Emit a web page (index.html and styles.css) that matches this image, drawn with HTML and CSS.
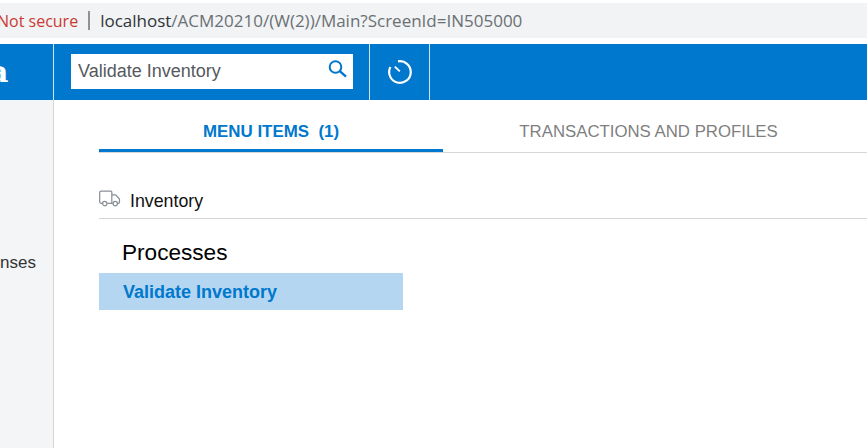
FILE: index.html
```html
<!DOCTYPE html>
<html lang="en">
<head>
<meta charset="utf-8">
<title>Validate Inventory</title>
<link rel="stylesheet" href="styles.css">
</head>
<body>
<div class="browser">
  <span class="insecure">Not secure</span>
  <span class="sep"></span>
  <span class="url"><span class="host">localhost</span>/ACM20210/(W(2))/Main?ScreenId=IN505000</span>
</div>
<header class="topbar">
  <div class="logo"><span class="logo-text">a</span></div>
  <div class="search-cell">
    <div class="search">
      <span class="search-text">Validate Inventory</span>
      <svg class="search-icon" width="20" height="20" viewBox="0 0 20 20" fill="none" stroke="#0077cc" stroke-width="2"><circle cx="7.500" cy="8" r="5.800"/><path d="M11.800 12.200 18 17.600" stroke-width="2.400"/></svg>
    </div>
  </div>
  <div class="history-cell">
    <svg width="26" height="26" viewBox="0 0 26 26" fill="none" stroke="#fff" stroke-width="2.200"><path d="M11 2.400A10.800 10.800 0 1 1 3.400 8"/><path d="M7.800 7.600 12.800 12.400" stroke-width="2"/></svg>
  </div>
  <div class="spacer"></div>
</header>
<div class="body">
  <aside class="sidebar"><span class="side-item">nses</span></aside>
  <main class="content">
    <nav class="tabs">
      <div class="tab active">MENU ITEMS&nbsp; (1)</div>
      <div class="tab">TRANSACTIONS AND PROFILES</div>
    </nav>
    <section class="group">
      <svg class="truck" width="22" height="17" viewBox="0 0 23 17" fill="none" stroke="#8a8f96" stroke-width="1.300"><path d="M3.500 13.500H2.200a1.500 1.500 0 0 1-1.500-1.500V2.200A1.500 1.500 0 0 1 2.200.7h10.200a1 1 0 0 1 1 1v11.800H8.800"/><path d="M13.400 4.700h4l4 4.300v3.200a1.300 1.300 0 0 1-1.300 1.300h-.6M14.200 13.500h.8"/><circle cx="6" cy="13.800" r="2.300"/><circle cx="17" cy="13.800" r="2.300"/></svg>
      <span class="group-name">Inventory</span>
    </section>
    <h2 class="heading">Processes</h2>
    <div class="result">Validate Inventory</div>
  </main>
</div>
</body>
</html>
```
FILE: styles.css
```css
* { box-sizing: border-box; }
html, body { margin: 0; height: 100%; overflow: hidden; background: #fff; }
body { font-family: "Liberation Sans", Arial, sans-serif; width: 867px; height: 448px; padding-top: 3px; }
.browser { height: 35px; background: #f1f3f4; display: flex; align-items: center; font-family: "Open Sans", sans-serif; font-size: 16px; white-space: nowrap; }
.insecure { color: #cb3a33; margin-left: -3px; }
.sep { width: 2px; height: 19px; background: #8f9296; margin: 0 11px 0 10px; }
.url { color: #6b7075; font-size: 17px; margin-left: -1px; }
.host { color: #303438; }
.topbar { margin-top: 6px; height: 56px; background: #0078cd; display: flex; }
.logo { width: 54px; border-right: 1px solid #cfe4f4; overflow: hidden; display: flex; align-items: center; }
.logo-text { color: #fff; font-family: "DejaVu Serif", serif; font-weight: 700; font-size: 30px; margin-left: -11px; margin-top: -1px; }
.search-cell { width: 316px; border-right: 1px solid #cfe4f4; padding: 10px 0 0 17px; }
.search { width: 282px; height: 35px; background: #fff; display: flex; align-items: center; justify-content: space-between; padding: 0 5px 0 7px; }
.search-text { color: #55595e; font-size: 18px; }
.search-icon { margin-top: -5px; }
.history-cell { width: 60px; border-right: 1px solid #cfe4f4; display: flex; align-items: center; justify-content: center; }
.spacer { flex: 1; }
.body { display: flex; height: 348px; }
.sidebar { width: 54px; background: #f4f5f7; border-right: 1px solid #d4d6d8; padding-top: 153px; overflow: hidden; }
.side-item { display: block; font-size: 17px; color: #333; line-height: 20px; }
.content { flex: 1; padding: 16px 0 0 45px; }
.tabs { display: flex; border-bottom: 1px solid #d4d6d8; height: 37px; }
.tab { width: 344px; height: 36px; text-align: center; font-size: 16.800px; line-height: 32px; color: #7f7f7f; }
.tab.active { color: #0078cd; font-weight: 700; border-bottom: 3px solid #0078cd; font-size: 16.900px; }
.tab:nth-child(2) { width: 411px; }
.group { margin-top: 36px; height: 30px; border-bottom: 1px solid #d4d6d8; display: flex; }
.truck { margin-top: 1px; }
.group-name { margin-left: 9px; font-size: 17.800px; line-height: 24px; color: #111; }
.heading { margin: 20px 0 0 23px; font-weight: 400; font-size: 22.600px; line-height: 28px; color: #000; }
.result { margin-top: 6px; width: 304px; height: 37px; background: #b5d6f0; color: #0078cd; font-weight: 700; font-size: 18px; line-height: 38px; padding-left: 24px; }
```
